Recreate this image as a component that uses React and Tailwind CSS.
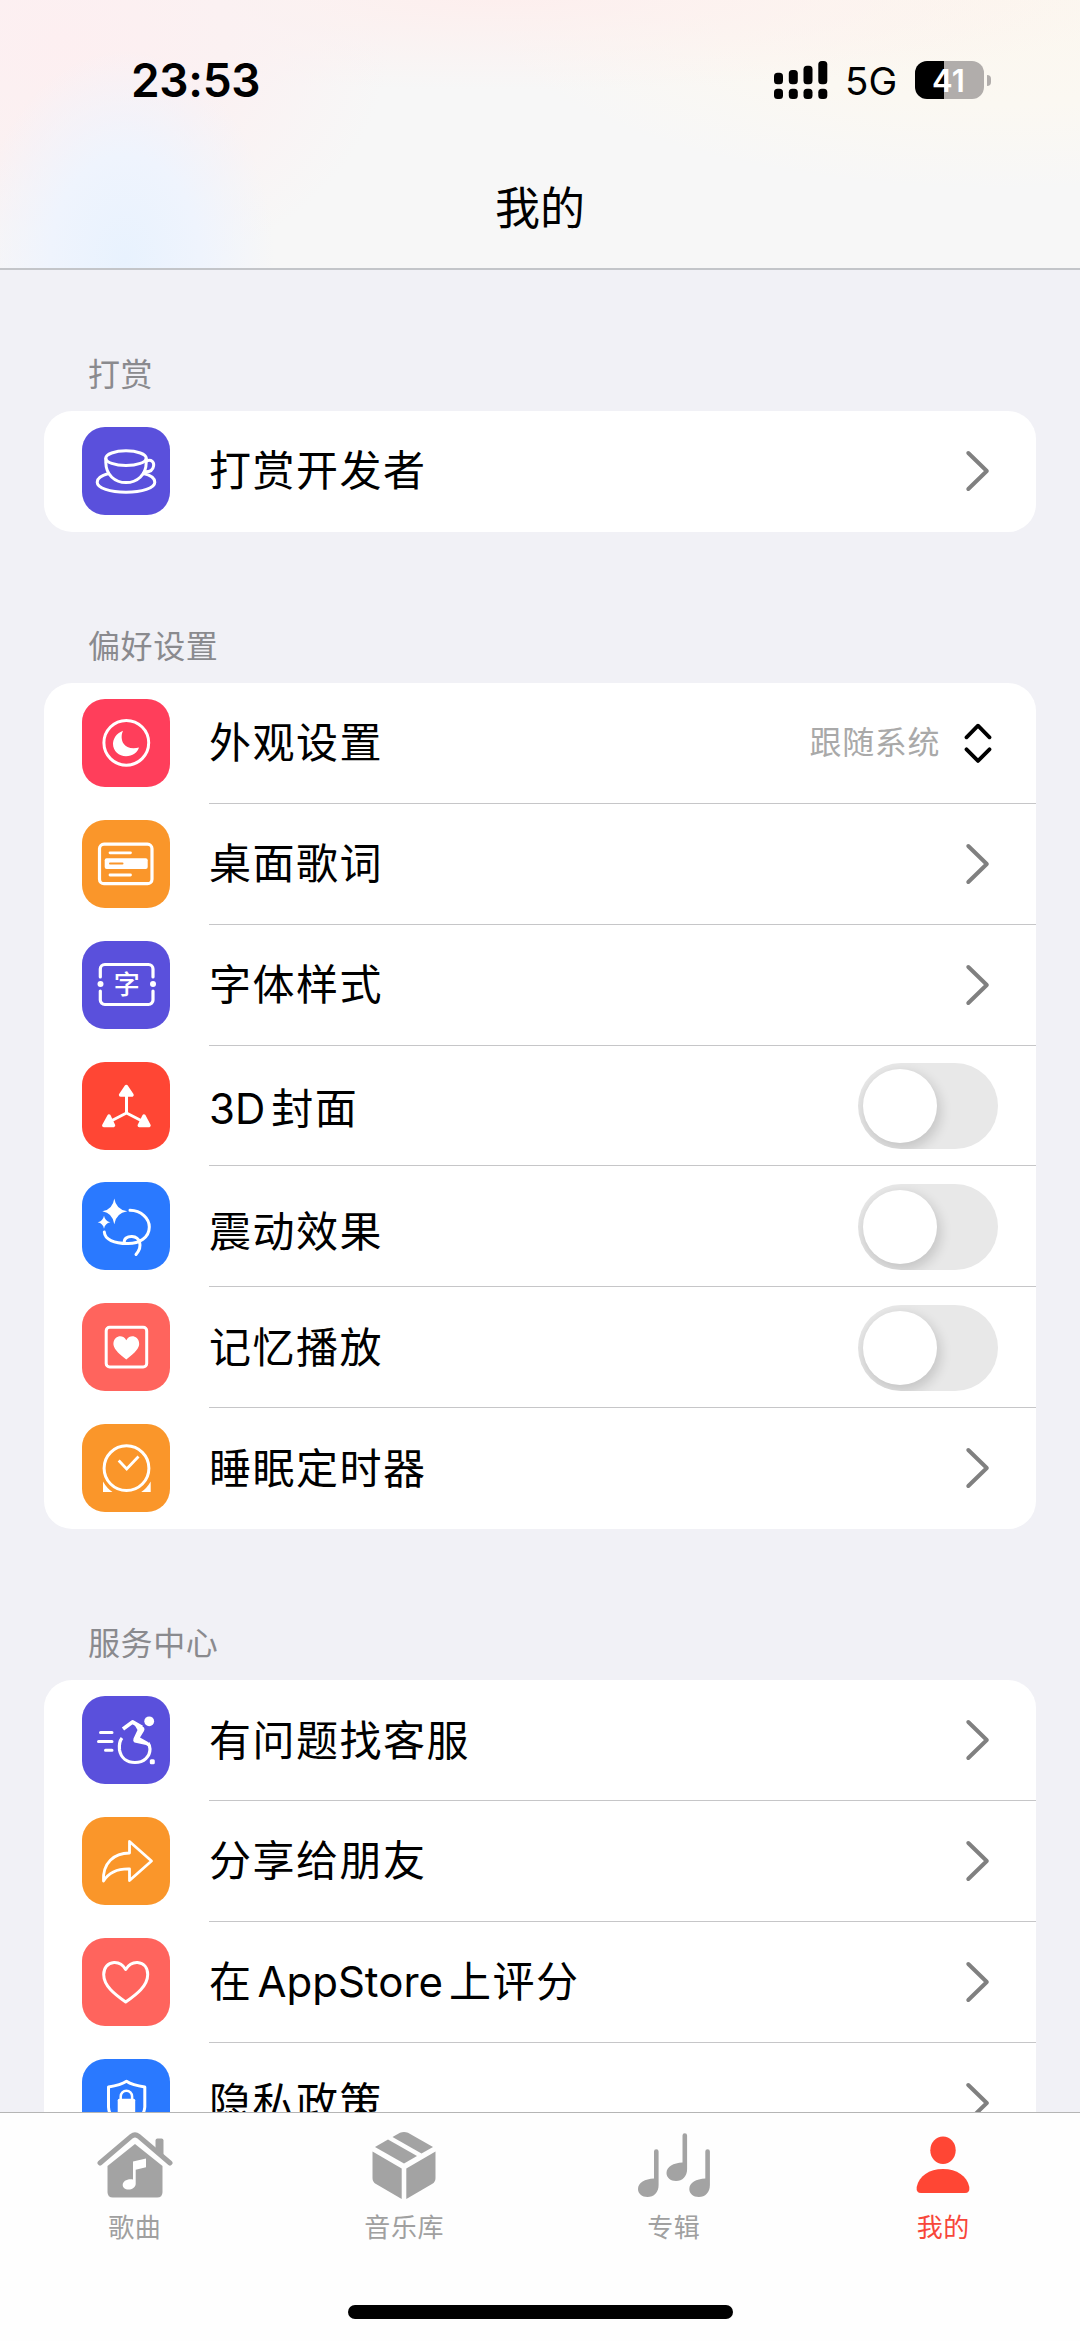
import React from 'react';
import clsx from 'clsx';

const CupIcon = () => (
  <g fill="none" stroke="#fff" strokeWidth="3" strokeLinecap="round">
    <ellipse cx="44" cy="31.2" rx="20.2" ry="7.4" />
    <path d="M23.8 31.5v4C24 48 33 55.6 44 55.6S64.2 48 64.2 35.5v-4" />
    <path d="M65 33.7c4.6-1.4 7.2 1.6 6.6 5.2-.6 3.8-4 6-8.8 5.8" />
    <path d="M26.5 46.5C19 48.5 15.2 51.5 15.2 55.2 15.2 61 28 65.2 44 65.2S72.8 61 72.8 55.2C72.8 51.5 69 48.2 61.5 46.5" />
  </g>
);

const MoonIcon = () => (
  <g>
    <circle cx="44.3" cy="43.8" r="22.4" fill="none" stroke="#fff" strokeWidth="3" />
    <path
      d="M41 31.700C34 34.500 31 40 31 45 31 52 37 57.200 44 57.200 50.500 57.200 55.500 53.500 57 48.500 50 50.500 44 48.500 41.500 44.500 39.300 41 39 36 41 31.700Z"
      fill="#fff"
    />
  </g>
);

const LyricsIcon = () => (
  <g fill="none" stroke="#fff" strokeWidth="3.2" strokeLinecap="round">
    <rect x="17.5" y="24.2" width="52.5" height="39.5" rx="4.5" />
    <path d="M28 32.8H48.500M28 55H48.500" strokeWidth="2.8" />
    <rect x="22.7" y="38.3" width="43" height="10.8" rx="2" fill="#fff" stroke="none" />
    <path d="M28 43.500H40.500" stroke="#fa962a" strokeWidth="2" />
  </g>
);

const FontIcon = () => (
  <g>
    <path
      d="M18.300 36V28a4.500 4.500 0 0 1 4.500-4.500H66.500a4.500 4.500 0 0 1 4.500 4.500V36M18.300 50V59a4.500 4.500 0 0 0 4.500 4.500H66.500a4.500 4.500 0 0 0 4.500-4.500V50"
      fill="none"
      stroke="#fff"
      strokeWidth="3.2"
      strokeLinecap="round"
    />
    <circle cx="18.5" cy="43" r="3" fill="#fff" />
    <circle cx="71" cy="43" r="3" fill="#fff" />
    <text x="44.7" y="53" fontSize="26" fontWeight="500" textAnchor="middle" fill="#fff">字</text>
  </g>
);

const AxesIcon = () => (
  <g fill="#fff" stroke="#fff" strokeLinejoin="round" strokeLinecap="round">
    <path d="M44.500 51V32M44.500 51L28 59.500M44.500 51L61 59.500" strokeWidth="3" />
    <path d="M44.300 24.500L50 33H38.600Z" strokeWidth="3.5" />
    <path d="M27 54L31.500 63.500H21.800Z" strokeWidth="3.5" />
    <path d="M62 54L67 63.500H57.300Z" strokeWidth="3.5" />
  </g>
);

const EffectIcon = () => (
  <g>
    <path d="M32.300 16.500Q34 27.700 45.300 29.300Q34 31 32.300 42.300Q30.700 31 20.300 29.300Q30.700 27.700 32.300 16.500Z" fill="#fff" />
    <path d="M22 33.700Q23 39 28.300 40.200Q23 41.300 22 46.700Q21 41.300 15.700 40.200Q21 39 22 33.700Z" fill="#fff" />
    <path
      d="M48 28.300C59.500 28.500 67.300 36.500 67.300 45 67.300 55.500 57.500 61.700 45.500 61.500 32 61.500 22.800 57.500 22.300 50M42.300 61.300C41.500 56.500 45.500 54.300 50 54.500 57.500 55 61.500 63.500 54 72.500"
      fill="none"
      stroke="#fff"
      strokeWidth="3"
      strokeLinecap="round"
    />
  </g>
);

const MemoryIcon = () => (
  <g>
    <rect x="24.2" y="24.2" width="40.5" height="39.8" rx="3.5" fill="none" stroke="#fff" strokeWidth="3" />
    <path
      d="M44.300 37.200C42 33.300 38.500 32.800 36 33.700 32.500 35 31 38.500 31.500 42 32.300 47 38.500 52 44.300 56.500 50 52 56.300 47 57.100 42 57.600 38.500 56 35 52.600 33.700 50 32.800 46.600 33.300 44.300 37.200Z"
      fill="#fff"
    />
  </g>
);

const TimerIcon = () => (
  <g>
    <circle cx="44.5" cy="44.2" r="22.4" fill="none" stroke="#fff" strokeWidth="3" />
    <path d="M36.700 36.500L44.700 45L56.500 32.500" fill="none" stroke="#fff" strokeWidth="2.8" />
    <path d="M21 57.500V68H30.500Q25 64.500 21 57.500ZM68.700 57.500V68H59.200Q64.700 64.500 68.700 57.500Z" fill="#fff" />
  </g>
);

const ServiceIcon = () => (
  <g fill="none" stroke="#fff" strokeWidth="3.2">
    <path d="M18.500 36.500H30M16.500 45.500H30M23.500 54.300H30" strokeLinecap="round" strokeWidth="3" />
    <circle cx="67.2" cy="25.3" r="4.9" fill="#fff" stroke="none" />
    <path d="M41 33L50.500 26L60 31.500" strokeWidth="3.8" strokeLinejoin="round" />
    <path d="M50 24.500L62 31.500Q63 33 62 35L58 41.500L66 46L69 52L64 49L52.500 46.500Q50.500 45 51.500 42.500L55.500 34Z" fill="#fff" stroke="none" />
    <path d="M40 42C37.500 45 37 49 37.500 54 39 62 45 66.500 53 66.500 62 66.500 68 60.500 68 53 68 50.500 67.500 49 66 47" />
    <rect x="67.8" y="63.3" width="5" height="5" rx="1.5" fill="#fff" stroke="none" />
  </g>
);

const ShareIcon = () => (
  <path
    d="M21.500 64C20.500 46 32 36 47.500 36V24.500L69.500 44L47.500 63.500V51.800C35 51.500 27 55 21.500 64Z"
    fill="none"
    stroke="#fff"
    strokeWidth="2.8"
    strokeLinejoin="round"
  />
);

const HeartIcon = () => (
  <path
    d="M43.700 31.500C40.500 26 36 24.300 32 24.500 25.500 25 21.700 30 21.700 36.500 21.700 48 33 56.500 43.700 64 54.500 56.500 65.700 48 65.700 36.500 65.700 30 62 25 55.500 24.500 51.500 24.300 47 26 43.700 31.500Z"
    fill="none"
    stroke="#fff"
    strokeWidth="3"
    strokeLinejoin="round"
  />
);

const PrivacyIcon = () => (
  <g fill="none" stroke="#fff" strokeWidth="3" strokeLinejoin="round">
    <path d="M44.500 22.300C39 26 33 27 26.500 28V48C27 58 35 64 44.500 68 54 64 62 58 62.800 48V28C56 27 50 26 44.500 22.300Z" />
    <path d="M38.700 41V37.500a5.700 5.700 0 0 1 11.400 0V41" strokeWidth="2.5" />
    <rect x="35.7" y="39.7" width="17.5" height="15" rx="1.5" fill="#fff" stroke="none" />
  </g>
);

const sections = [
  {
    title: '打赏',
    rows: [{ label: '打赏开发者', tile: 'bg-[#5a50dc]', icon: CupIcon }],
  },
  {
    title: '偏好设置',
    rows: [
      { label: '外观设置', tile: 'bg-[#ff3e5b]', icon: MoonIcon, value: '跟随系统' },
      { label: '桌面歌词', tile: 'bg-[#fa962a]', icon: LyricsIcon },
      { label: '字体样式', tile: 'bg-[#5a50dc]', icon: FontIcon },
      { label: '3D封面', tile: 'bg-[#ff4634]', icon: AxesIcon, toggle: true, labelClass: 'pt-[6px]' },
      { label: '震动效果', tile: 'bg-[#2a79ff]', icon: EffectIcon, toggle: true, labelClass: 'pt-[11px]' },
      { label: '记忆播放', tile: 'bg-[#ff645d]', icon: MemoryIcon, toggle: true, labelClass: 'pt-[2px]' },
      { label: '睡眠定时器', tile: 'bg-[#fa962a]', icon: TimerIcon, labelClass: 'pt-[2px]' },
    ],
  },
  {
    title: '服务中心',
    rows: [
      { label: '有问题找客服', tile: 'bg-[#5a50dc]', icon: ServiceIcon },
      { label: '分享给朋友', tile: 'bg-[#fa962a]', icon: ShareIcon },
      { label: '在AppStore上评分', tile: 'bg-[#ff645d]', icon: HeartIcon },
      { label: '隐私政策', tile: 'bg-[#2a79ff]', icon: PrivacyIcon },
    ],
  },
];

// Latin runs get a little air on the sides that touch Chinese characters
const Label = ({ text }) =>
  text.split(/([A-Za-z0-9]+)/).filter(Boolean).map((part, i) =>
    /^[A-Za-z0-9]/.test(part) ? (
      <span key={i} className={clsx('mr-[6px] tracking-normal', i > 0 && 'ml-[5px]')}>{part}</span>
    ) : (
      <span key={i}>{part}</span>
    )
  );

const Toggle = () => (
  <div className="mr-[38px] mt-[1px] h-[86px] w-[140px] overflow-hidden rounded-full bg-[#e8e8e8] pl-[5px] pt-[6px]">
    <div className="h-[74px] w-[74px] rounded-full bg-white shadow-[2px_5px_12px_2px_rgba(0,0,0,0.14)]" />
  </div>
);

const Chevron = () => (
  <svg className="mr-[46px] h-[42px] w-[25px]" viewBox="0 0 25 42" fill="none" stroke="#808080" strokeWidth="4" strokeLinecap="round" strokeLinejoin="round">
    <path d="M3.300 3L21.800 21L3.300 39" />
  </svg>
);

const UpDown = () => (
  <svg className="mr-[44px] h-[42px] w-[28px]" viewBox="0 0 28 42" fill="none" stroke="#000" strokeWidth="3.8" strokeLinecap="round" strokeLinejoin="round">
    <path d="M2.500 15.300L14 3.700L25.500 15.300M2.500 27.300L14 38.900L25.500 27.300" />
  </svg>
);

const Row = ({ row, last }) => {
  const Icon = row.icon;
  return (
    <div className="flex h-[120.9px] items-stretch">
      <div className={clsx('ml-[38px] mr-[39px] mt-[16px] h-[88px] w-[88px] shrink-0 rounded-[23px]', row.tile)}>
        <svg viewBox="0 0 88 88" className="h-[88px] w-[88px]">
          <Icon />
        </svg>
      </div>
      <div className={clsx('flex flex-1 items-center border-b', last ? 'border-transparent' : 'border-[#c6c6c8]')}>
        <span className={clsx('flex-1 text-[42px] leading-[60px] tracking-[1.5px] text-black', row.labelClass || 'pt-[1px]')}>
          <Label text={row.label} />
        </span>
        {row.value && <span className="mr-[24px] pt-[1px] text-[32px] leading-[44px] tracking-[0.6px] text-[#a9a9a9]">{row.value}</span>}
        {row.value ? <UpDown /> : row.toggle ? <Toggle /> : <Chevron />}
      </div>
    </div>
  );
};

const SongsTab = () => (
  <svg viewBox="0 0 76 70" className="h-[70px] w-[76px]">
    <path d="M3 33L34.500 6.200Q38 3.500 41.500 6.200L73 33" fill="none" stroke="#a3a3a3" strokeWidth="5" strokeLinecap="round" />
    <path d="M58.500 10.500q0-2 2-2h4q2 0 2 2V27l-8-6.500Z" fill="#a3a3a3" />
    <path d="M10.500 36L38 14L65.500 36V62q0 5.500-5.500 5.500H16q-5.500 0-5.500-5.500Z" fill="#a3a3a3" />
    <path d="M36 31.500L49 28.500V37.200L38.700 39.700V54C38.500 57.300 35 59.600 31.500 59.600 28 59.600 25.700 57.500 25.700 55 25.700 51 30.500 48.500 36 49.500Z" fill="#fff" />
  </svg>
);

const LibraryTab = () => (
  <svg viewBox="0 0 64 70" className="h-[70px] w-[64px]" fill="#a3a3a3">
    <path d="M20.500 7L28 2.800Q32 1 36 2.800L61 17L49.500 23.500Z" />
    <path d="M16 9.500L45 26L32 33.500L3 17Z" />
    <path d="M.500 21.500L29.700 38.500V69L4 54Q.500 52 .500 48Z" />
    <path d="M63.500 21.500L34.300 38.500V69L60 54Q63.500 52 63.500 48Z" />
  </svg>
);

const AlbumTab = () => (
  <svg viewBox="0 -1 74 70" className="h-[70px] w-[74px]" fill="#a3a3a3">
    <path id="note" d="M17 20.500a2.300 2.300 0 0 1 4.600 0V54C21.600 61.500 17 66 10.500 66 5 66 1 62.500 1 58 1 51.500 8 48 17 47.500Z" />
    <use href="#note" x="28.5" y="-16" />
    <use href="#note" x="51.3" y="0" />
  </svg>
);

const MineTab = () => (
  <svg viewBox="0 0 54 70" className="h-[70px] w-[54px]" fill="#ff4634">
    <ellipse cx="27" cy="20.3" rx="12.7" ry="13.7" />
    <path d="M.700 57C3 46 13 39 27 39S51 46 53.300 57Q54 63 49 63H5Q0 63 .700 57Z" />
  </svg>
);

const tabs = [
  { label: '歌曲', icon: SongsTab },
  { label: '音乐库', icon: LibraryTab },
  { label: '专辑', icon: AlbumTab },
  { label: '我的', icon: MineTab, active: true },
];

const StatusBar = () => (
  <div className="flex h-[160px] items-center justify-between pl-[131px] pr-[89px]">
    <span className="text-[46px] font-semibold leading-none tracking-[-0.3px] text-black">23:53</span>
    <div className="flex items-center">
      <svg viewBox="0 0 54 38" className="h-[38px] w-[54px]">
        <rect x="0" y="11.7" width="9" height="11.5" rx="3.5" />
        <rect x="14.8" y="9" width="9" height="14.2" rx="3.5" />
        <rect x="29.5" y="4.7" width="9" height="18.5" rx="3.5" />
        <rect x="44.3" y="0" width="9" height="23.2" rx="3.5" />
        <rect x="0" y="27.7" width="9" height="10.3" rx="3.5" />
        <rect x="14.8" y="27.7" width="9" height="10.3" rx="3.5" />
        <rect x="29.5" y="27.7" width="9" height="10.3" rx="3.5" />
        <rect x="44.3" y="27.7" width="9" height="10.3" rx="3.5" />
      </svg>
      <span className="ml-[17px] w-[52px] pt-[3px] text-[38.5px] leading-none">5G</span>
      <div className="ml-[18px] flex h-[38px] w-[69px] items-center justify-center rounded-[12px] bg-[linear-gradient(90deg,#000_29px,#b1adab_29px)] pr-[2px] text-[31px] font-semibold leading-none text-white">
        41
      </div>
      <div className="ml-[3px] h-[11px] w-[4px] rounded-r-full bg-[#b1adab]" />
    </div>
  </div>
);

export default function App() {
  return (
    <div className="flex h-[2341px] w-[1080px] flex-col overflow-hidden bg-[#f1f1f6] font-['Inter','Noto_Sans_CJK_SC',sans-serif]">
      <header className="h-[270px] shrink-0 border-b-2 border-[#c3c5c9] bg-[#f7f7f7] bg-[radial-gradient(ellipse_150px_210px_at_125px_260px,#e8f2fe_0%,#eff4fd_50%,transparent_100%),radial-gradient(ellipse_330px_250px_at_60px_40px,#fdeff1_0%,#fbf1f2_50%,transparent_100%),radial-gradient(ellipse_650px_90px_at_500px_0px,#fdefee_0%,transparent_100%),radial-gradient(ellipse_520px_190px_at_1000px_0px,#fcf7ef_0%,#fbf8f2_55%,transparent_100%)]">
        <StatusBar />
        <h1 className="pt-[1px] text-center text-[45px] leading-[96px] text-black">我的</h1>
      </header>

      <main className="flex-1 overflow-hidden px-[44px]">
        {sections.map((section, i) => (
          <section key={section.title} className={i === 0 ? 'pt-[81px]' : 'pt-[91px]'}>
            <h2 className="mb-[12px] ml-[44px] h-[48px] text-[32px] leading-[48px] tracking-[0.6px] text-[#8a8a8e]">{section.title}</h2>
            <div className="overflow-hidden rounded-[28px] bg-white">
              {section.rows.map((row, j) => (
                <Row key={row.label} row={row} last={j === section.rows.length - 1} />
              ))}
            </div>
          </section>
        ))}
      </main>

      <footer className="flex h-[229px] shrink-0 flex-col border-t border-[#b5b5b5] bg-[#fefefe]">
        <nav className="grid grid-cols-4 pt-[17px] pr-[2px]">
          {tabs.map(({ label, icon: Icon, active }) => (
            <div key={label} className={clsx('flex flex-col items-center', active ? 'text-[#f8463a]' : 'text-[#a0a0a0]')}>
              <Icon />
              <span className="mt-[8px] text-[26px] leading-[40px] tracking-[0.6px]">{label}</span>
            </div>
          ))}
        </nav>
        <div className="mx-auto mb-[22px] mt-auto h-[14px] w-[385px] rounded-full bg-black" />
      </footer>
    </div>
  );
}
